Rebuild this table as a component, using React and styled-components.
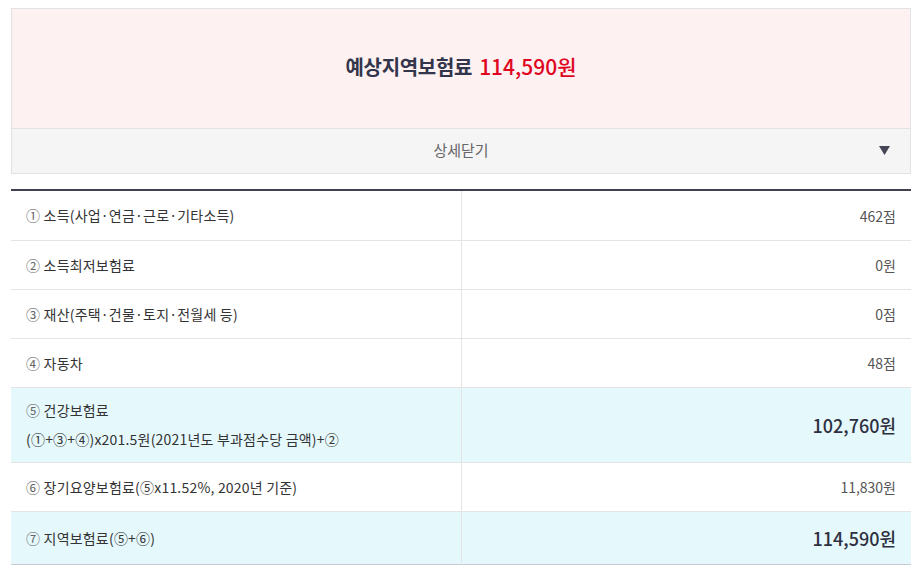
import React, { useState } from 'react'
import styled, { createGlobalStyle } from 'styled-components'

const Global = createGlobalStyle`
  body {
    margin: 0;
    background: #fff;
    font-family: "Noto Sans CJK KR", "Noto Sans", sans-serif;
    color: #333;
  }
`

const Wrap = styled.div`
  width: 900px;
  padding: 8px 0 0 11px;
`

const Summary = styled.div`
  border: 1px solid #e1e1e6;
`

const Total = styled.div`
  height: 120px;
  box-sizing: border-box;
  padding-bottom: 5px;
  display: flex;
  align-items: center;
  justify-content: center;
  background: #fdf1f2;
  border-bottom: 1px solid #e1e1e6;
  font-size: 20px;
  font-weight: 700;
  letter-spacing: -0.3px;
  color: #33354a;

  em {
    font-style: normal;
    font-weight: 500;
    color: #e0061f;
    margin-left: 7px;
    font-size: 21px;
    letter-spacing: 0;
  }
`

const Toggle = styled.button`
  width: 100%;
  height: 44px;
  border: 0;
  background: #f5f5f5;
  display: flex;
  align-items: center;
  justify-content: center;
  position: relative;
  font-family: inherit;
  font-size: 15px;
  color: #666;
  cursor: pointer;
  padding: 0 0 4px;

  svg {
    position: absolute;
    right: 20px;
    top: 17px;
    transform: ${({ open }) => (open ? 'none' : 'rotate(180deg)')};
  }
`

const Table = styled.table`
  width: 900px;
  margin-top: 15px;
  border-collapse: collapse;
  border-top: 2px solid #40414f;
  border-bottom: 1px solid #c6cad3;
  font-size: 14px;
  table-layout: fixed;
`

const Row = styled.tr`
  background: ${({ hl }) => (hl ? '#e5f8fc' : '#fff')};
  border-bottom: 1px solid #e4e4e4;
  &:first-child td { height: 49px; }
  &:last-child { border-bottom: 0; }
  &:last-child td { height: 52px; }
`

const Label = styled.td`
  width: 435px;
  height: ${({ tall }) => (tall ? '74px' : '48px')};
  padding: 0 0 0 15px;
  border-right: 1px solid #e4e4e4;
  color: #333;
  line-height: 29px;
  vertical-align: middle;
  letter-spacing: 0.2px;

  b {
    font-weight: 400;
    color: #666;
  }
`

const Value = styled.td`
  padding: 0 15px 0 0;
  text-align: right;
  vertical-align: middle;
  font-size: ${({ big }) => (big ? '18px' : '14px')};
  font-weight: ${({ big }) => (big ? 500 : 400)};
  color: ${({ big }) => (big ? '#2e3040' : '#555')};
`

const rows = [
  { no: '①', label: '소득(사업·연금·근로·기타소득)', value: '462점' },
  { no: '②', label: '소득최저보험료', value: '0원' },
  { no: '③', label: '재산(주택·건물·토지·전월세 등)', value: '0점' },
  { no: '④', label: '자동차', value: '48점' },
  { no: '⑤', label: '건강보험료', sub: '(①+③+④)x201.5원(2021년도 부과점수당 금액)+②', value: '102,760원', hl: true, big: true },
  { no: '⑥', label: '장기요양보험료(⑤x11.52%, 2020년 기준)', value: '11,830원' },
  { no: '⑦', label: '지역보험료(⑤+⑥)', value: '114,590원', hl: true, big: true },
]

export default function App() {
  const [open, setOpen] = useState(true)
  return (
    <Wrap>
      <Global />
      <Summary>
        <Total>
          예상지역보험료<em>114,590원</em>
        </Total>
        <Toggle open={open} onClick={() => setOpen(!open)}>
          상세닫기
          <svg width="11" height="9" viewBox="0 0 11 9">
            <path d="M0 0 H11 L5.5 9 Z" fill="#444656" />
          </svg>
        </Toggle>
      </Summary>
      {open && (
        <Table>
          <tbody>
            {rows.map((r) => (
              <Row key={r.no} hl={r.hl}>
                <Label tall={!!r.sub}>
                  <b>{r.no}</b> {r.label}
                  {r.sub && <><br />{r.sub}</>}
                </Label>
                <Value big={r.big}>{r.value}</Value>
              </Row>
            ))}
          </tbody>
        </Table>
      )}
    </Wrap>
  )
}
